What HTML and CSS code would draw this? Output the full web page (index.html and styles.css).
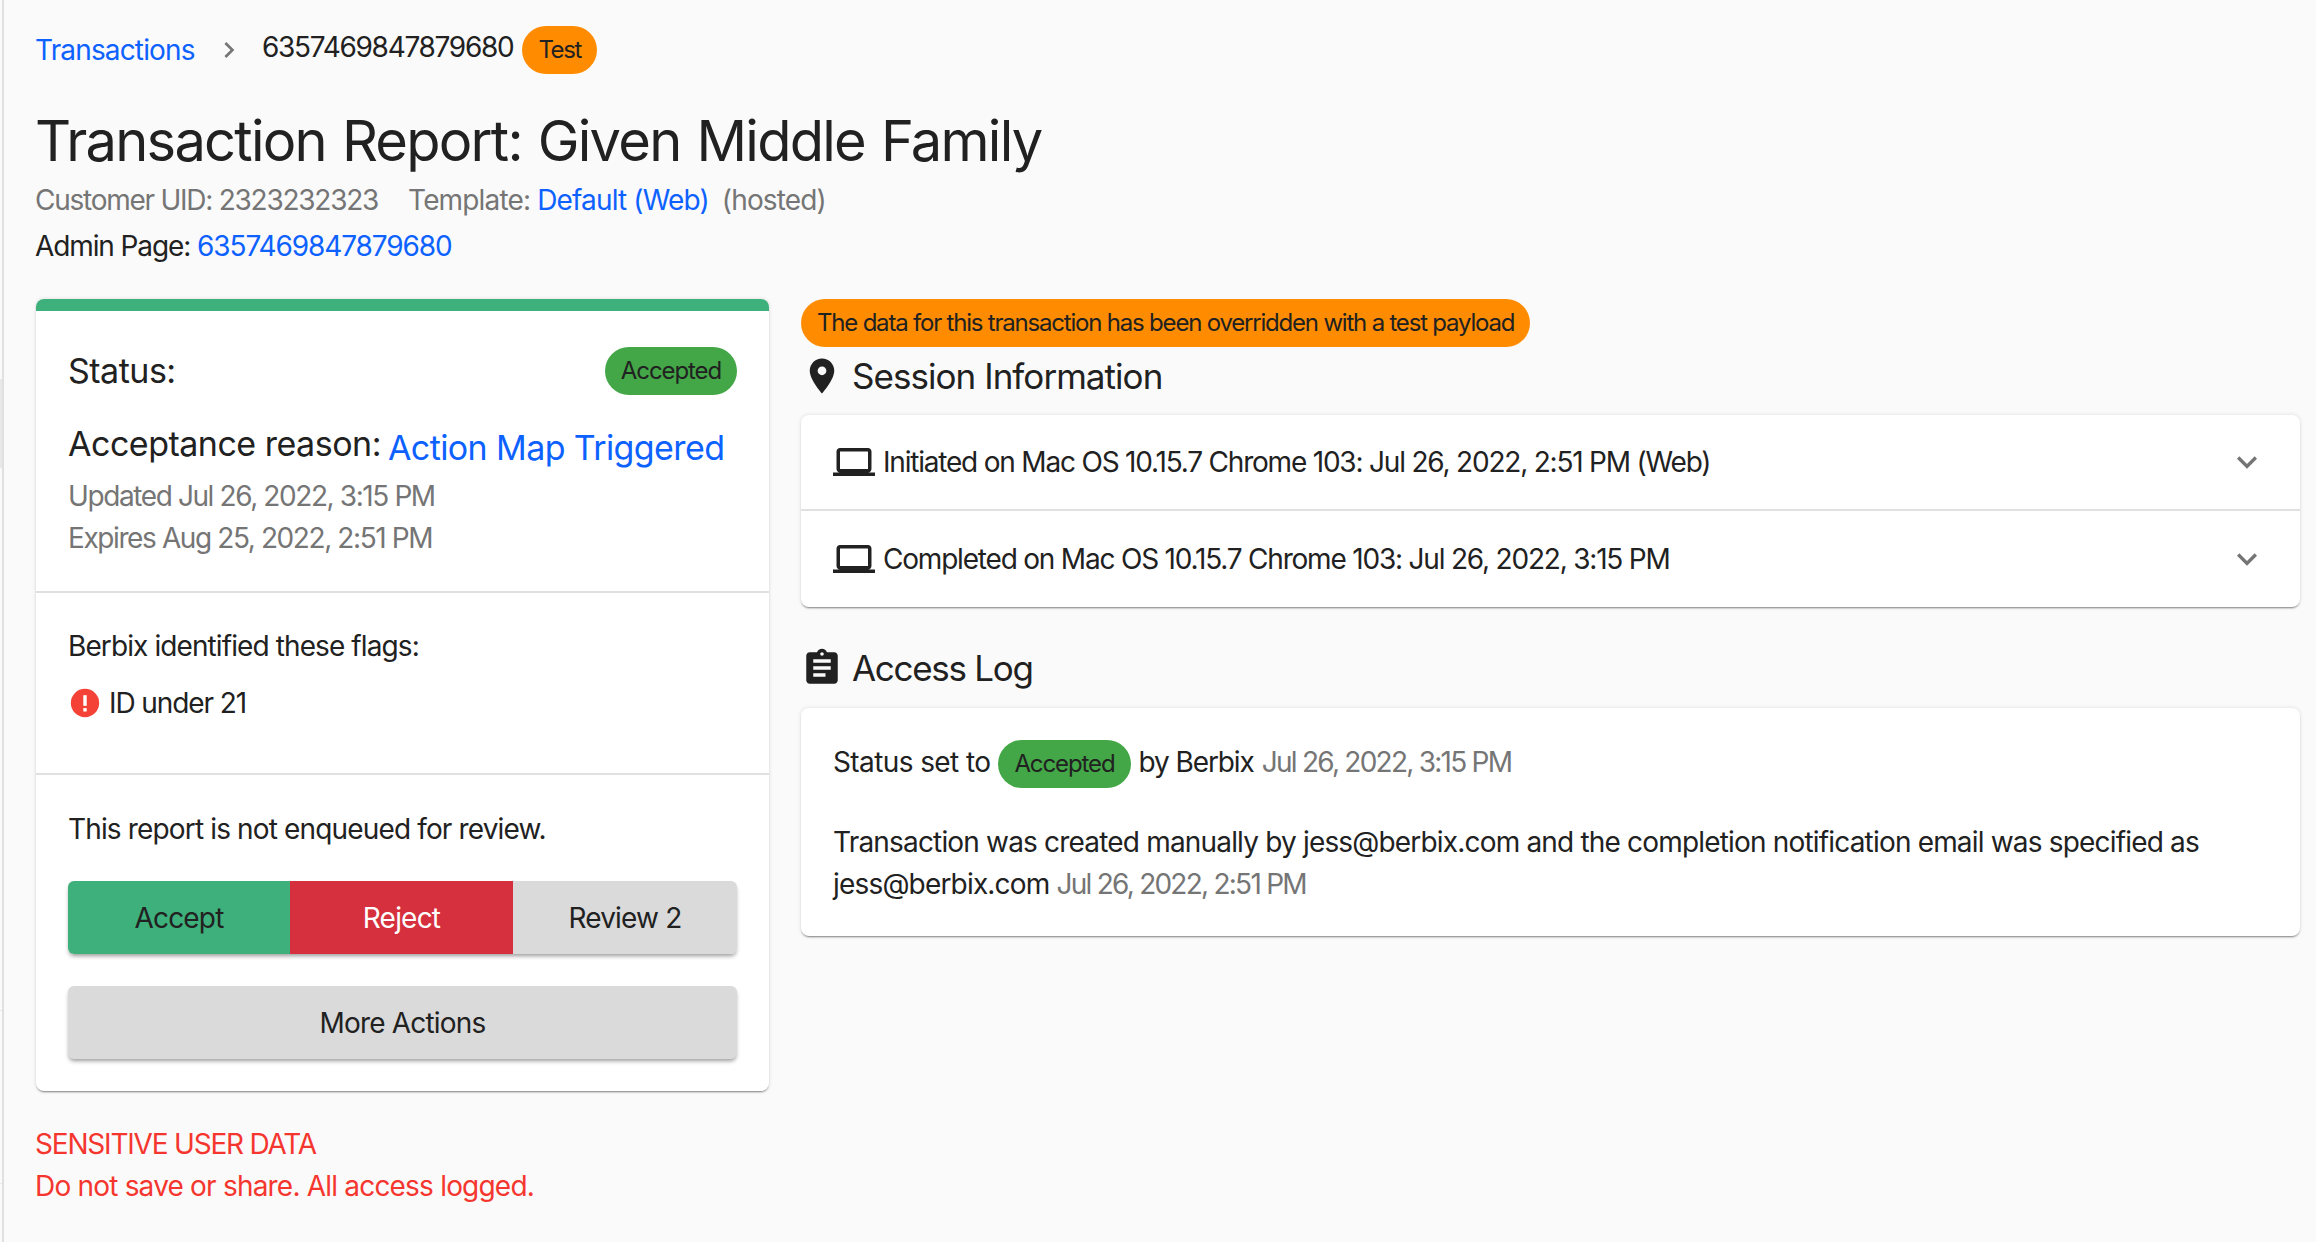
FILE: index.html
```html
<!DOCTYPE html>
<html lang="en">
<head>
<meta charset="utf-8">
<title>Transaction Report</title>
<link rel="stylesheet" href="styles.css">
</head>
<body>
<div class="edge-mark edge-mark-block"></div>
<div class="edge-mark edge-mark-tick-a"></div>
<div class="edge-mark edge-mark-tick-b"></div>
<main class="page">
  <nav class="crumbs">
    <a class="link crumb-link">Transactions</a>
    <svg class="crumb-sep" viewBox="0 0 24 24"><path d="M10 6 8.59 7.41 13.17 12l-4.58 4.59L10 18l6-6z"/></svg>
    <span class="crumb-id">6357469847879680</span>
    <span class="pill pill-test">Test</span>
  </nav>
  <h1 class="title">Transaction Report: Given Middle Family</h1>
  <div class="meta">
    <span class="muted meta-uid">Customer UID: 2323232323</span>
    <span class="muted meta-template">Template: <a class="link">Default (Web)</a></span>
    <span class="muted meta-hosted">(hosted)</span>
  </div>
  <div class="admin">Admin Page: <a class="link">6357469847879680</a></div>
  <div class="columns">
    <div class="left">
      <section class="card">
        <div class="card-bar"></div>
        <div class="block block-status">
          <div class="status-row">
            <span class="status-label">Status:</span>
            <span class="pill pill-ok">Accepted</span>
          </div>
          <div class="reason"><span class="status-label">Acceptance reason:</span> <a class="link reason-link">Action Map Triggered</a></div>
          <div class="muted dates">Updated Jul 26, 2022, 3:15 PM</div>
          <div class="muted dates">Expires Aug 25, 2022, 2:51 PM</div>
        </div>
        <div class="block block-flags">
          <div class="flags-title">Berbix identified these flags:</div>
          <div class="flag">
            <svg class="flag-icon" viewBox="0 0 24 24"><circle cx="12" cy="12" r="10" fill="#f44336"/><rect x="10.8" y="6.5" width="2.4" height="7.5" fill="#fff"/><rect x="10.8" y="15.6" width="2.4" height="2.4" fill="#fff"/></svg>
            <span>ID under 21</span>
          </div>
        </div>
        <div class="block block-actions">
          <div class="review-note">This report is not enqueued for review.</div>
          <div class="btn-group">
            <button class="btn btn-accept">Accept</button>
            <button class="btn btn-reject">Reject</button>
            <button class="btn btn-review">Review 2</button>
          </div>
          <button class="btn btn-more">More Actions</button>
        </div>
      </section>
      <div class="warning">
        <div class="warning-caps">SENSITIVE USER DATA</div>
        <div>Do not save or share. All access logged.</div>
      </div>
    </div>
    <div class="right">
      <div class="banner-row"><span class="pill pill-banner">The data for this transaction has been overridden with a test payload</span></div>
      <h2 class="section-head section-head-first">
        <svg class="head-icon" viewBox="0 0 24 24"><path d="M12 2C8.13 2 5 5.13 5 9c0 5.25 7 13 7 13s7-7.75 7-13c0-3.87-3.13-7-7-7zm0 9.5a2.5 2.5 0 0 1 0-5 2.5 2.5 0 0 1 0 5z"/></svg>
        <span>Session Information</span>
      </h2>
      <section class="panel">
        <div class="session-row">
          <svg class="laptop" viewBox="0 0 24 24"><path d="M20 18c1.1 0 1.99-.9 1.99-2L22 6c0-1.1-.9-2-2-2H4c-1.1 0-2 .9-2 2v10c0 1.1.9 2 2 2H0v2h24v-2h-4zM4 6h16v10H4V6z"/></svg>
          <span class="session-text">Initiated on Mac OS 10.15.7 Chrome 103: Jul 26, 2022, 2:51 PM (Web)</span>
          <svg class="chev" viewBox="0 0 24 24"><path d="M16.59 8.59 12 13.17 7.41 8.59 6 10l6 6 6-6z"/></svg>
        </div>
        <div class="session-row">
          <svg class="laptop" viewBox="0 0 24 24"><path d="M20 18c1.1 0 1.99-.9 1.99-2L22 6c0-1.1-.9-2-2-2H4c-1.1 0-2 .9-2 2v10c0 1.1.9 2 2 2H0v2h24v-2h-4zM4 6h16v10H4V6z"/></svg>
          <span class="session-text">Completed on Mac OS 10.15.7 Chrome 103: Jul 26, 2022, 3:15 PM</span>
          <svg class="chev" viewBox="0 0 24 24"><path d="M16.59 8.59 12 13.17 7.41 8.59 6 10l6 6 6-6z"/></svg>
        </div>
      </section>
      <h2 class="section-head section-head-log">
        <svg class="head-icon" viewBox="0 0 24 24"><path d="M19 3h-4.18C14.4 1.84 13.3 1 12 1s-2.4.84-2.82 2H5c-1.1 0-2 .9-2 2v14c0 1.1.9 2 2 2h14c1.1 0 2-.9 2-2V5c0-1.1-.9-2-2-2zm-7 0c.55 0 1 .45 1 1s-.45 1-1 1-1-.45-1-1 .45-1 1-1zm2 14H7v-2h7v2zm3-4H7v-2h10v2zm0-4H7V7h10v2z"/></svg>
        <span>Access Log</span>
      </h2>
      <section class="panel log-panel">
        <div class="log-line log-status"><span>Status set to</span><span class="pill pill-ok pill-inline">Accepted</span><span class="log-by">by Berbix</span><span class="muted log-date">Jul 26, 2022, 3:15 PM</span></div>
        <div class="log-line log-created">Transaction was created manually by jess@berbix.com and the completion notification email was specified as jess@berbix.com <span class="muted log-date">Jul 26, 2022, 2:51 PM</span></div>
      </section>
    </div>
  </div>
</main>
</body>
</html>
```

FILE: styles.css
```css
* { box-sizing: border-box; }
html, body { margin: 0; height: 100%; }
body {
  background: #fafafa;
  color: #212121;
  font-family: Inter, "Liberation Sans", sans-serif;
  font-size: 28px;
  letter-spacing: -0.85px;
  line-height: 42px;
  overflow: hidden;
}
.edge-mark { position: absolute; left: 0; width: 2px; background: #e8e8e8; }
.edge-mark-block { top: 379px; height: 89px; }
.edge-mark-tick-a { top: 1010px; height: 1px; }
.edge-mark-tick-b { top: 1183px; height: 1px; }
.page {
  height: 1242px;
  margin-left: 2px;
  border-left: 2px solid #e0e0e0;
  padding: 26px 16px 0 32px;
}
.link { color: #0d62ff; }
.muted { color: #757575; }
.crumbs { display: flex; align-items: center; height: 48px; }
.crumb-link { width: 157px; white-space: nowrap; margin-left: -1px; }
.crumb-sep { width: 32px; height: 32px; fill: #757575; margin-left: 21px; flex: none; }
.crumb-id { margin-left: 17px; position: relative; top: -3px; letter-spacing: -1.3px; }
.pill {
  display: inline-flex;
  align-items: center;
  height: 48px;
  border-radius: 24px;
  padding: 0 16px;
  font-size: 24px;
  letter-spacing: -1.1px;
  white-space: nowrap;
}
.pill-test { background: #ff8c00; margin-left: 9px; letter-spacing: -1.4px; }
.pill-ok { background: #43a647; }
.pill-banner { background: #ff8c00; letter-spacing: -1.2px; }
.title {
  margin: 32px 0 0 -1px;
  font-size: 56px;
  font-weight: 400;
  line-height: 70px;
  letter-spacing: -1.75px;
  word-spacing: 2px;
}
.meta { display: flex; margin: 1px 0 0 -1px; height: 46px; align-items: center; }
.meta-uid { letter-spacing: -1.25px; }
.meta-template { margin-left: 30px; }
.meta-hosted { margin-left: 13px; }
.admin { height: 46px; display: flex; align-items: center; white-space: pre; margin-left: -1px; letter-spacing: -1.1px; }
.columns { display: flex; gap: 32px; margin-top: 30px; align-items: flex-start; }
.left { width: 733px; flex: none; }
.right { flex: 1; min-width: 0; }
.card {
  background: #fff;
  border-radius: 8px;
  overflow: hidden;
  box-shadow: 0 0 4px rgba(0,0,0,.12), 0 2px 2px -1px rgba(0,0,0,.45);
}
.card-bar { height: 12px; background: #3eb07b; }
.block { padding: 0 32px; border-bottom: 2px solid #e0e0e0; }
.block:last-child { border-bottom: 0; }
.block-status { height: 282px; padding-top: 36px; }
.status-row { display: flex; justify-content: space-between; align-items: center; height: 48px; }
.status-label { font-size: 34px; letter-spacing: -0.5px; }
.reason { margin: 25px 0 7px; height: 48px; line-height: 48px; white-space: nowrap; }
.reason-link { font-size: 34px; letter-spacing: -0.6px; position: relative; top: 4px; }
.dates { line-height: 42px; letter-spacing: -1.4px; }
.block-flags { height: 182px; padding-top: 32px; }
.flags-title { letter-spacing: -0.9px; }
.flag { display: flex; align-items: center; gap: 7px; margin-top: 15px; letter-spacing: -1.1px; }
.flag-icon { width: 34px; height: 34px; flex: none; }
.block-actions { height: 316px; padding-top: 33px; }
.btn-group { display: flex; margin-top: 31px; border-radius: 6px; box-shadow: 0 3px 4px -1px rgba(0,0,0,.4); overflow: hidden; }
.btn {
  border: 0;
  height: 73px;
  font: inherit;
  letter-spacing: -0.8px;
  color: #212121;
  padding: 0;
  display: block;
}
.btn-accept { width: 222px; background: #3eb07b; }
.btn-reject { width: 223px; background: #d62f3d; color: #fff; }
.btn-review { flex: 1; background: #dadada; }
.btn-more {
  width: 100%;
  margin-top: 32px;
  background: #dadada;
  border-radius: 6px;
  box-shadow: 0 3px 4px -1px rgba(0,0,0,.4);
}
.warning { margin: 32px 0 0 -1px; color: #f5362e; letter-spacing: -0.8px; }
.warning-caps { letter-spacing: -1.2px; }
.banner-row { height: 48px; display: flex; }
.section-head {
  display: flex;
  align-items: center;
  margin: 0;
  font-size: 35px;
  font-weight: 400;
  letter-spacing: -0.95px;
  line-height: 48px;
  height: 48px;
}
.section-head-first { margin-top: 5px; }
.section-head-log { margin-top: 37px; letter-spacing: -1.3px; }
.head-icon { width: 42px; height: 42px; fill: #212121; margin: 0 9px 0 0; flex: none; }
.panel {
  margin-top: 15px;
  background: #fff;
  border-radius: 8px;
  box-shadow: 0 0 4px rgba(0,0,0,.12), 0 2px 2px -1px rgba(0,0,0,.45);
  overflow: hidden;
}
.session-row {
  display: flex;
  align-items: center;
  height: 96px;
  padding: 0 32px;
  border-bottom: 2px solid #e0e0e0;
}
.session-row:last-child { border-bottom: 0; }
.laptop { width: 42px; height: 42px; fill: #212121; flex: none; margin-right: 8px; }
.session-text { flex: 1; letter-spacing: -1.2px; }
.chev { width: 40px; height: 40px; fill: #757575; flex: none; margin-right: 1px; }
.log-panel { margin-top: 16px; padding: 30px 32px 20px; height: 228px; }
.log-status { display: flex; align-items: center; gap: 8px; height: 48px; white-space: nowrap; letter-spacing: -0.6px; }
.log-by { letter-spacing: -1.1px; }
.pill-inline { position: relative; top: 2px; letter-spacing: -1.1px; }
.log-date { letter-spacing: -1.75px; }
.log-created { margin-top: 35px; letter-spacing: -0.82px; }
```
